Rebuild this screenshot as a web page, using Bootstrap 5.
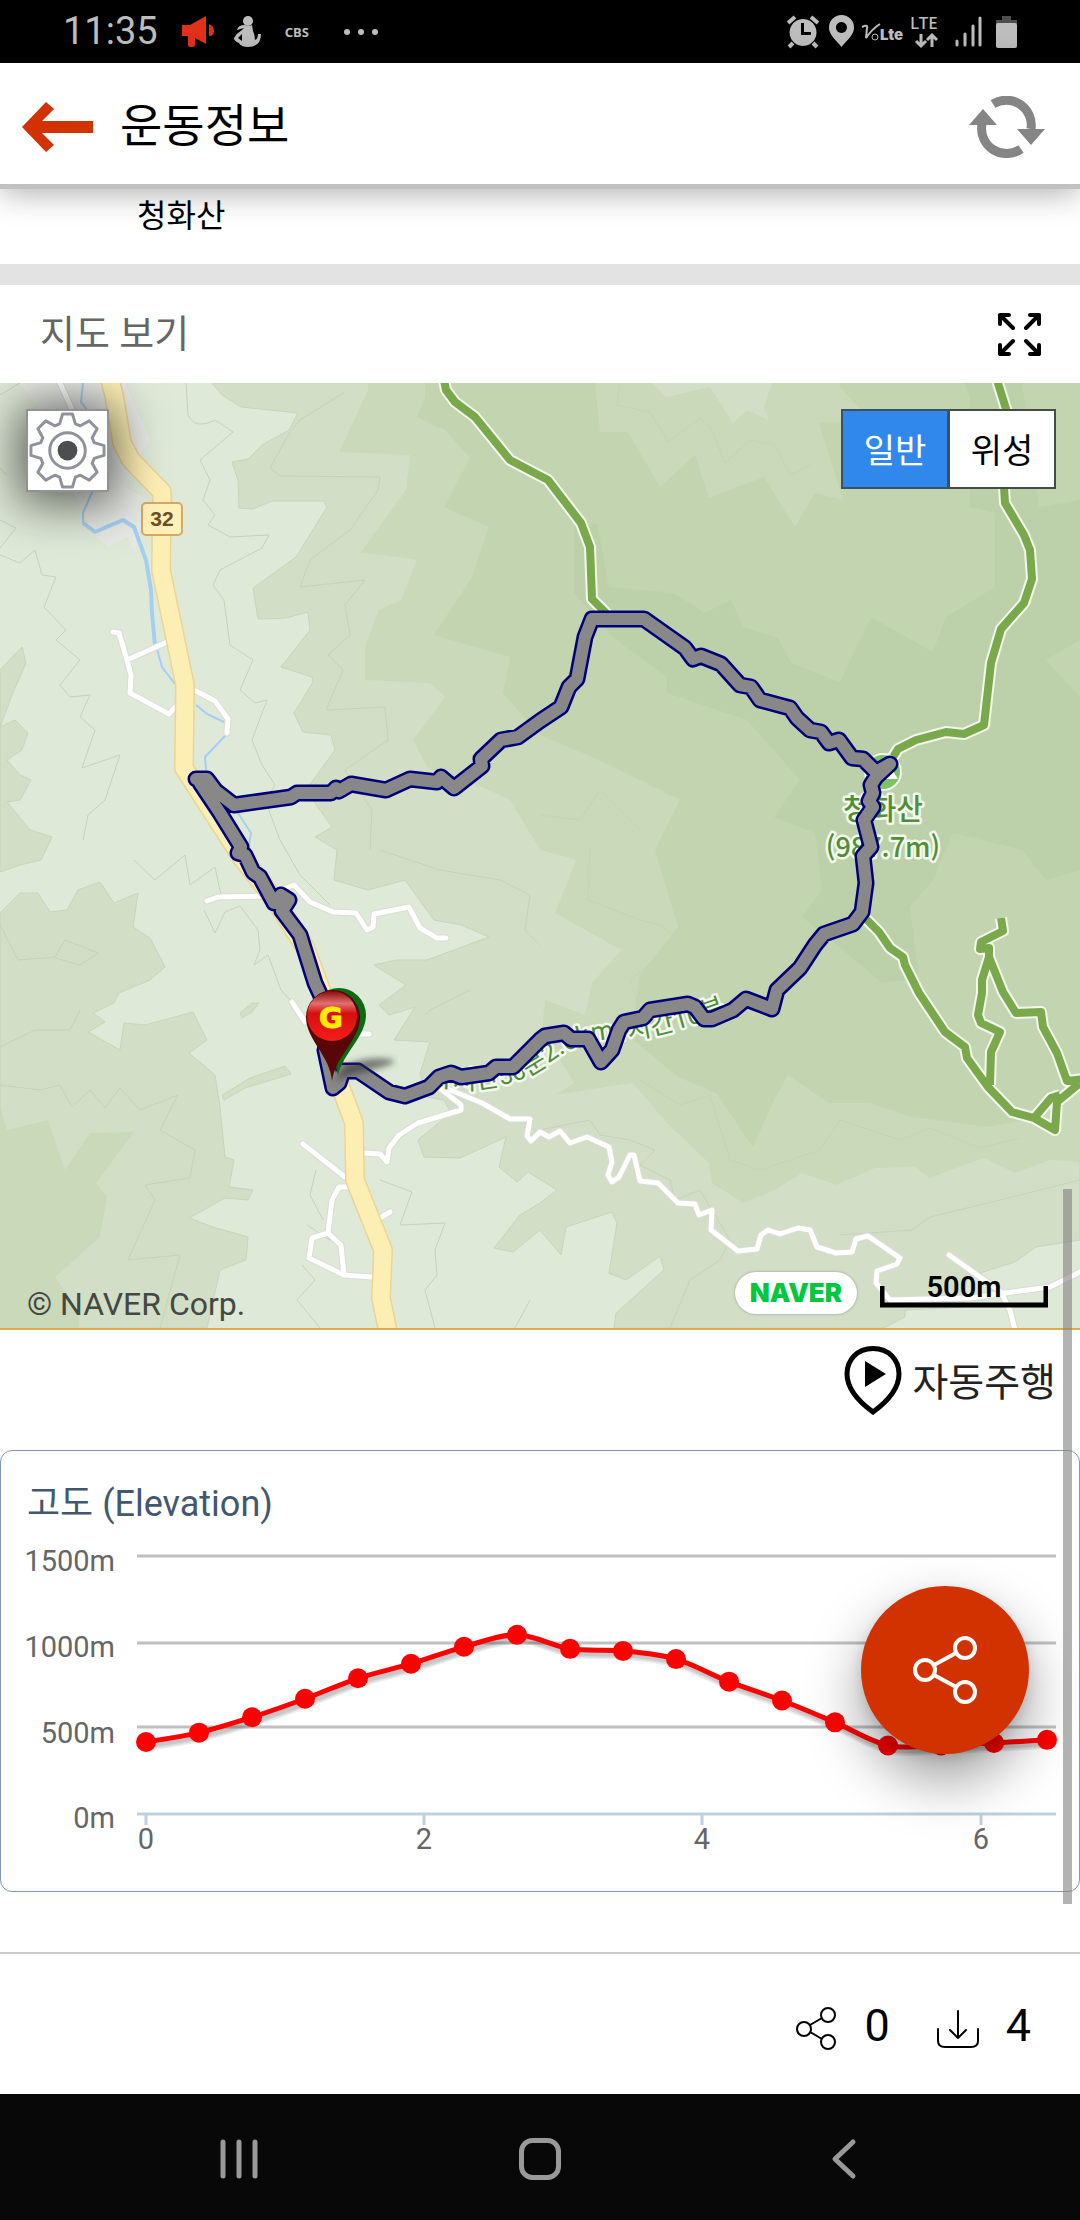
<!DOCTYPE html>
<html lang="ko">
<head>
<meta charset="utf-8">
<meta name="viewport" content="width=device-width, initial-scale=1">
<title>운동정보</title>
<link href="https://cdn.jsdelivr.net/npm/bootstrap@5.3.0/dist/css/bootstrap.min.css" rel="stylesheet">
<style>
  body { font-family: Roboto, "Noto Sans CJK KR", sans-serif; color: #000; background: #fff; line-height: 1.2; }
  svg { display: block; flex: none; }
  button { flex: none; }
  .status-strip { min-height: 63px; padding: 0 63px; background: #000; color: #bdbdbd; }
  .status-strip .clock { font-size: 38px; }
  .status-strip .carrier { font: 700 13px "Noto Sans", sans-serif; }
  .status-strip .runner { margin-left: 20px; }
  .status-strip .more { margin-left: 34px; }
  .app-header { min-height: 126px; padding: 6px 34px 0 20px; border-bottom: 5px solid #c1c1c1; background: #fff; box-shadow: 0 4px 30px rgba(0,0,0,.32); z-index: 2; }
  .app-header h1 { font-size: 46px; font-weight: 400; }
  .peak-row { min-height: 75px; padding: 0 137px 20px; font-size: 32px; }
  .divider-band { height: 21px; background: #e3e3e3; }
  .map-title { min-height: 98px; padding: 2px 36px 0 40px; }
  .map-title h2 { font-size: 38px; font-weight: 400; color: #666; }
  .map-frame { border-bottom: 2px solid #e3ab45; overflow: hidden; }
  .map-frame > svg { width: 100%; height: auto; }
  .gear-btn { top: 26px; left: 26px; width: 83px; height: 83px; border: 2px solid #929292; background: #fff; box-shadow: 0 4px 48px 8px rgba(0,0,0,.6); }
  .layer-switch { top: 26px; right: 24px; }
  .layer-switch .btn { width: 108px; height: 80px; border: 2px solid #454c45; border-radius: 0; background: #fff; color: #000; font-size: 34px; line-height: 76px; padding: 2px 0 0; }
  .layer-switch .btn-check:checked + .btn { background: #3088ec; color: #fff; border-color: #3c5064; }
  .map-credit { left: 27px; bottom: 5px; font-size: 32px; color: #444844; }
  .map-corner { right: 32px; bottom: 14px; gap: 23px; }
  .naver-pill { width: 122px; height: 42px; border-radius: 21px; background: #fff; color: #03c83f; font: 900 26px/42px Inter, sans-serif; box-shadow: 0 0 3px rgba(0,0,0,.3); }
  .scale-bar { width: 168px; height: 38px; font-size: 29px; font-weight: 600; line-height: 34px; margin-bottom: 6px; }
  .scale-bar svg { left: 0; bottom: 0; }
  .drive-row { min-height: 120px; padding: 0 24px 20px; }
  .drive-row button { gap: 10px; font-size: 39px; color: #222; }
  .drive-row .caption { padding-top: 6px; }
  .chart-card { border: 1px solid #8299b8; border-radius: 12px; min-height: 442px; padding-top: 29px; }
  .chart-card h2 { font-size: 36px; font-weight: 400; color: #42586e; padding-left: 26px; line-height: 48px; }
  .chart-card .plot { width: 100%; height: auto; }
  .share-fab { right: 50px; bottom: 137px; width: 168px; height: 168px; background: #d23200; box-shadow: 0 26px 56px rgba(0,0,0,.38), 0 4px 12px rgba(0,0,0,.12); }
  .count-bar { margin-top: 60px; border-top: 2px solid #ccc; min-height: 142px; padding: 4px 49px 0; }
  .count-bar .btn { gap: 27px; font-size: 45px; padding: 0; border: 0; color: #000; }
  .count-bar svg { margin-top: 6px; }
  .count-bar .counts { gap: 47px; }
  .nav-strip { min-height: 126px; padding: 4px 88px 0; background: #080808; }
  .scroll-thumb { right: 8px; top: 1189px; width: 9px; height: 715px; background: rgba(128,128,128,.6); z-index: 3; }
</style>
<script src="https://cdn.jsdelivr.net/npm/bootstrap@5.3.0/dist/js/bootstrap.bundle.min.js"></script>
</head>
<body class="position-relative">

<div class="status-strip d-flex align-items-center">
  <span class="clock">11:35</span>
  <svg class="ms-4" width="32" height="32" viewBox="0 0 32 32" fill="#e2301a"><path d="M0 9 8 9 24 0V28L13 22V29Q13 31 11 31H8Q6 31 6 29V20H0ZM27 8Q32 10 32 15T27 20Z"/></svg>
  <svg class="runner" width="27" height="32" viewBox="0 0 27 32" fill="#bdbdbd"><circle cx="14" cy="5" r="5"/><path fill-rule="evenodd" d="M11 9Q14 11 18 9L19 15Q21 19 21 24 24 23 24 18H27Q27 31 14 31 7 31 5 27 0 25 0 22 3 17 8 14L10 12Q6 13 3 14 4 9 11 9ZM8 18 4 22 8 25Z"/></svg>
  <span class="carrier ms-4">CBS</span>
  <svg class="more" width="36" height="8" viewBox="0 0 36 8" fill="#bdbdbd"><circle cx="4" cy="4" r="3"/><circle cx="18" cy="4" r="3"/><circle cx="32" cy="4" r="3"/></svg>
  <svg class="ms-auto" width="230" height="40" viewBox="787 11 230 40" fill="#bdbdbd" stroke="none">
    <path fill-rule="evenodd" d="M803 18a13.500 13.500 0 1 0 .1 0zM801 22h3v9h7v3h-10z"/>
    <path d="M788 22l7-6M818 22l-7-6M793 42l-4 4M813 42l4 4" stroke="#bdbdbd" stroke-width="4"/>
    <path fill-rule="evenodd" d="M841.500 14a12.500 12.500 0 0 0-12.500 13c0 7 8 13 12.500 19 4.500-6 12.500-12 12.500-19a12.500 12.500 0 0 0-12.500-13zm0 7a5.500 5.500 0 1 1-.1 0z"/>
    <path d="M862 26q6-3 5 1l-1 10q6-9 14-14" fill="none" stroke="#bdbdbd" stroke-width="2"/><circle cx="875" cy="36" r="3" fill="none" stroke="#bdbdbd" stroke-width="1"/>
    <text x="880" y="39" font-family="Inter" font-weight="900" font-size="15">Lte</text>
    <text x="910" y="28" font-family="Noto Sans" font-weight="500" font-size="17">LTE</text>
    <path d="M921 33v12m-5-5l5 5 5-5M932 46V34m-5 5l5-5 5 5" fill="none" stroke="#bdbdbd" stroke-width="3"/>
    <path d="M957 40v4M965 33v11M973 25v19M980 17v27" stroke="#bdbdbd" stroke-width="3" stroke-linecap="round"/>
    <path d="M1002 15h9v4h6v4h-21v-4h6z" fill="#4e4e4e"/><rect x="996" y="22" width="21" height="25" rx="2"/>
  </svg>
</div>

<header class="app-header d-flex align-items-center position-relative">
  <button type="button" class="btn p-0 border-0" aria-label="뒤로">
    <svg width="76" height="54" viewBox="21 99 76 54" fill="#d23200"><path d="M23 126 47 101 55 108 43 120H94V132H43L55 144 47 151Z"/></svg>
  </button>
  <h1 class="mb-0 ms-4">운동정보</h1>
  <button type="button" class="btn p-0 border-0 ms-auto" aria-label="새로고침">
    <svg width="78" height="62" viewBox="966 95 78 62" fill="none" stroke="#858585" stroke-width="9">
      <path d="M991 103A25 25 0 0 1 1029 128M1019 148A25 25 0 0 1 980 123"/>
      <path d="M1015 128h28l-14 16zM967 124h28l-14-16z" fill="#858585" stroke="none"/></svg>
  </button>
</header>

<main>
  <div class="peak-row d-flex align-items-center">청화산</div>
  <div class="divider-band"></div>

  <section>
    <div class="map-title d-flex align-items-center justify-content-between">
      <h2 class="mb-0">지도 보기</h2>
      <button type="button" class="btn p-0 border-0" aria-label="전체 화면">
        <svg width="50" height="50" viewBox="993 311 50 50" fill="none" stroke="#000" stroke-width="4" stroke-linecap="round" stroke-linejoin="round"><path d="M1008 316h-9v9M999 316l13 13M1029 316h9v9M1038 316l-13 13M1008 355h-9v-9M999 355l13-13M1029 355h9v-9M1038 355l-13-13"/></svg>
      </button>
    </div>

    <div class="map-frame position-relative">
      <svg viewBox="0 383 1080 945" role="img" aria-label="청화산 등산 경로 지도">
        <rect y="383" width="1080" height="945" fill="#dfe9d8"/>
        <!-- hypsometric tints, low to high -->
        <g fill="#d2dfc6" stroke="#c7d5b9" stroke-width="1" stroke-linejoin="round">
          <path d="M212 383 222 395 241 407 298 413 289 430 262 445 248 459 232 462 238 480 239 508 253 509 272 501 324 501 327 507 296 557 253 588 258 619 286 618 308 612 310 630 281 667 312 677 313 682 294 713 303 732 331 735 335 750 306 790 332 827 315 837 337 850 334 880 368 890 405 880 434 920 461 925 489 937 427 960 396 960 374 965 406 985 379 1005 389 1015 415 1007 394 1040 430 1042 420 1073 427 1097 444 1100 451 1113 418 1140 424 1157 460 1158 506 1137 499 1167 517 1182 528 1172 557 1190 540 1203 520 1215 494 1248 513 1252 540 1230 561 1255 566 1227 612 1212 617 1223 609 1273 626 1280 660 1256 664 1270 616 1313 614 1328H884L905 1317V1310L963 1307 967 1277 1015 1262 1036 1247 1080 1240V383Z"/>
          <path d="M0 670 22 647 26 663 12 695 0 727 15 720 28 733 22 750 7 760 20 775 31 780 20 800 7 802 30 830 52 837 41 860 20 865 0 872Z"/>
          <path d="M0 913 20 893 38 893 50 912 67 910 78 890 100 882 114 903 138 893 133 927 150 938 165 967 150 980 119 993 114 1003 93 1013 105 1022 88 1032 120 1050 124 1023 145 1025 193 1012 207 1040 189 1053 215 1075 220 1107 225 1157 234 1160 229 1187 253 1190 248 1200 225 1198 189 1218 213 1227 248 1237 246 1260 220 1270 207 1328H0Z"/>
          <path d="M222 1095 250 1078 285 1066 291 1074 245 1088 224 1100ZM240 1013 252 1003 259 1003 252 1012 242 1018Z"/>
        </g>
        <g fill="#cad9ba">
          <path d="M368 390 339 452 410 455 406 490 360 553 382 555 417 560 401 600 379 610 365 647 365 680 430 683 445 697 413 740 427 767 458 782 482 787 510 800 540 850 576 860 555 913 621 950 592 983 585 1015 545 1000 542 1030 574 1083 555 1095 633 1083 667 1123 709 1163 712 1183 743 1203 775 1190 802 1173 836 1185 875 1168 915 1167 929 1178 984 1158 1015 1173 1050 1160 1080 1162V383H368Z"/>
          <path d="M0 1105 7 1130 48 1120 65 1170 90 1133 134 1132 96 1183 107 1197 100 1237 55 1277 79 1313 79 1328H0Z"/>
        </g>
        <path fill="#c3d4b0" d="M425 397 417 417 445 430 470 458 444 507 489 527 472 577 434 635 510 657 503 693 540 735 599 760 640 780 680 800 655 850 678 927 640 975 630 1037 678 1077 716 1093 753 1147 774 1100 788 1075 829 1103 870 1103 912 1117 988 1127 1034 1118 1080 1090V383H425Z"/>
        <path fill="#cad9ba" d="M595 383 600 432 628 432 660 487 695 455 709 498 764 477 795 527 815 493 843 500 819 423 870 420 840 387V383Z"/>
        <path fill="#d2dfc6" d="M652 383 666 397 710 387 733 423 747 410 769 420 764 407 772 383Z"/>
        <path fill="#bcd1aa" d="M574 527 597 523 609 587 674 593 705 613 731 600 743 627 778 638 791 663 840 682 871 617 933 652 946 617 995 587V513L970 507V397L964 383H1022L1039 507 1080 500V640L1046 660 1080 697V870L1046 880 1022 850 953 833 933 880 910 907 919 980 881 982 843 950 802 917 822 890 815 833 774 817 800 780 747 720 667 693V677L616 640 574 593Z"/>
        <path fill="#e7e9e4" d="M20 383 40 410 75 495 95 535 108 547 128 537 135 553 148 500 125 487 150 440 125 383Z"/>
        <!-- contour lines -->
        <g fill="none" stroke="#c5d3b8" stroke-width="1" stroke-linejoin="round">
          <path d="M186 383 188 415Q195 430 215 420L233 432 200 460 210 480 203 500 215 515 208 525 230 537 269 535 262 548 220 570 213 585 224 600 230 645 253 660 240 690 255 703 267 700 252 740 262 765 275 785 265 800 280 840 300 875 330 905"/>
          <path d="M345 392 300 420 290 432 270 468 280 476 380 477 378 490 350 530 310 560 300 587 365 580 345 605 350 635 328 655 343 670 326 710 385 707 388 740 345 770 372 810 370 850"/>
          <path d="M0 555 20 563 35 550 42 575 56 577 44 607 66 630 56 640 80 660 60 685 70 697 90 695 80 717 95 730 82 768 120 755 105 800 88 815 83 840M20 383 0 395M0 468 6 475M0 520 16 528 0 548"/>
          <path d="M0 925 18 960 55 957 65 940 98 953 80 965 55 958M0 1047 35 1030 70 1030 80 1010M0 1085 40 1090 60 1085 72 1107 90 1090 105 1108 120 1088 140 1110 178 1095 160 1130 195 1150 190 1178 145 1185 155 1200 128 1260 180 1255 160 1328"/>
          <path d="M204 910 215 933 225 912 240 906 258 930 260 950 254 965 268 955 281 990 290 1000M134 860 155 880 185 855 190 885 215 867 222 900M316 1170 310 1195 323 1220M307 1225 330 1240M302 1265 315 1280 297 1300 320 1328M380 1180 412 1192 400 1225 445 1223 435 1250 437 1275 425 1290 435 1328M515 1328 530 1300"/>
          <path d="M540 1130 590 1120 600 1135 630 1140 655 1150 640 1165 670 1180 675 1200 700 1190 730 1240 720 1260 690 1280 670 1328M840 1235 912 1230 930 1217 1000 1200 1080 1180M620 383 617 405 650 412 668 442 700 418 712 430 725 463 750 440 775 445 790 475 812 465M640 1080 680 1105 710 1095 730 1160 760 1170 820 1150 840 1120 900 1140 930 1128 980 1148 1020 1138"/>
          <path d="M590 850 588 900 640 920 660 925 680 940 630 980 640 1010M380 850 440 870 500 880 530 895 525 930 540 945M470 990 430 1010 425 1015M540 815 580 820 600 790 640 830"/>
        </g>
        <!-- stream -->
        <g fill="none" stroke="#a5cff0" stroke-width="2" stroke-linejoin="round">
          <path d="M83 383 81 402 95 420M93 490 83 513V523M155 642 162 667 175 684M196 705 207 714 226 723M226 735 205 757 206 770M238 813 251 833 249 845"/>
          <path d="M83 523 95 532 123 520 134 527 146 560 151 590 152 613 155 645" stroke-width="4"/>
        </g>
        <!-- minor roads: casing, then surface -->
        <g fill="none" stroke-linejoin="round" stroke-linecap="round">
          <defs>
            <path id="lanes" d="M113 632 119 633 127 660 131 675 130 693 169 714 180 702M127 660 167 642M196 691 215 701 228 719 227 733M60 383 76 418M207 901 218 897 262 896 294 885 310 902 333 912 356 913 367 930 373 927 374 914 409 907 420 928 437 938 446 938M292 1002 305 1022M358 1034H369M441 1089 461 1105V1110L418 1123 399 1135 389 1148 387 1162 380 1154 365 1153M448 1089 482 1103 510 1119H530L527 1136 531 1141 540 1132 549 1137 560 1131 570 1143 587 1137 609 1147 612 1162 608 1175 612 1182 619 1177 630 1155H634L640 1181 658 1183 678 1203 695 1204 699 1215 712 1210 711 1230 738 1251 757 1249 761 1235 768 1230 780 1234 798 1228 810 1230 817 1247 836 1253 852 1252 856 1239 868 1236 900 1258 897 1264 877 1271 876 1283 890 1300 970 1298 1005 1293 1050 1287 1080 1272M949 1255 1001 1292 1010 1310 1015 1330M303 1144 345 1177M348 1187H339L332 1200 328 1233 312 1238 309 1258 344 1275 372 1277M328 1233 341 1245 344 1275M380 1218 390 1212"/>
          </defs>
          <use href="#lanes" stroke="#d9dcd4" stroke-width="7"/>
          <use href="#lanes" stroke="#fff" stroke-width="5"/>
        </g>
        <!-- route 32 -->
        <defs><path id="road32" d="M110 380 114 395 122 443 131 460 162 492 161 570 185 685 184 768 242 858 275 900 305 947 325 1000 335 1072 354 1123 355 1180 383 1250 381 1298 388 1332"/></defs>
        <g fill="none" stroke-linejoin="round">
          <use href="#road32" stroke="#ead592" stroke-width="20"/>
          <use href="#road32" stroke="#fdefb4" stroke-width="17"/>
        </g>
        <rect x="142" y="503" width="40" height="32" rx="4" fill="#fef1b8" stroke="#d7a864" stroke-width="2"/>
        <text x="162" y="526" text-anchor="middle" font-family="Liberation Sans" font-weight="700" font-size="21" fill="#6b5027">32</text>
        <!-- hiking trails -->
        <defs><path id="trails" d="M444 380 446 390 455 402 475 417 510 460 548 480 581 523 590 547 592 599 607 614M997 380 1007 412 1004 487 1005 503 1024 535 1030 550 1032 579 1024 603 1001 629 991 663 984 725 964 734 946 732 916 740 898 749 888 765M865 918 879 932 890 948 903 957 905 965 919 993 945 1032 965 1047 967 1058 988 1087 1012 1112 1034 1118 1055 1130 1057 1102 1080 1083M1034 1118 1051 1098 1060 1095M1001 918 1003 931 981 942 980 949 989 948V957L982 980V993L978 1015 981 1023 1000 1032 991 1052 990 1085M989 957 1003 992 1016 1013 1041 1012 1043 1027 1057 1053 1067 1081 1084 1079"/></defs>
        <g fill="none" stroke-linejoin="round">
          <use href="#trails" stroke="#f3f7ee" stroke-width="12"/>
          <use href="#trails" stroke="#79a94a" stroke-width="8"/>
        </g>
        <circle cx="883" cy="772" r="18" fill="#7cc463" stroke="#f3f7ee" stroke-width="2"/>
        <path d="M884 779 891 768 898 779Z" fill="#fff"/>
        <g fill="#4f8f37" stroke="#f3f7ee" stroke-width="5" stroke-linejoin="round" paint-order="stroke">
          <g text-anchor="middle" font-family="Noto Sans CJK KR" font-weight="500">
            <text x="883" y="820" font-size="29">청화산</text>
            <text x="883" y="857" font-size="27">(987.7m)</text>
          </g>
          <path id="trailLabel" d="M438 1089Q510 1094 548 1064T630 1040Q690 1030 760 1000" fill="none" stroke="none"/>
          <text font-size="26" font-family="Roboto, Noto Sans CJK KR"><textPath href="#trailLabel">1시간50분2.6km1시간10분</textPath></text>
        </g>
        <!-- recorded track: outline, then body -->
        <defs><path id="track" d="M196 779H207L216 791 234 805 291 797 297 793H331L336 788 339 791 351 784 386 790 410 779 437 782 441 777 454 788 482 766 481 759 501 740 518 737 540 721 561 707 569 687 577 679 585 637 592 619H644L685 648 693 659 701 656 721 664 740 685 751 687 760 700 790 708 797 718 810 730 821 732 829 743 839 740 852 758 863 759 876 772 890 764 876 777 871 785 873 793 869 801 873 807 864 820 871 847 863 856 866 883 862 912 853 924 824 934 815 945 800 968 777 990 772 1009 746 999 733 1010 712 1019H704L695 1007 688 1004 650 1010 643 1018 624 1022 619 1030 612 1050 601 1062 588 1039H571L564 1033 545 1036 540 1040 513 1067H496L489 1073 461 1077 451 1073 439 1077 429 1087 405 1096 389 1092 358 1071H343L339 1083 333 1088 325 1050M315 983 300 935 282 911 289 900 281 895 274 903 260 877 253 872 245 855 238 853 241 847 220 813 200 783M315 983 332 1020"/></defs>
        <g fill="none" stroke-linejoin="round" stroke-linecap="round">
          <use href="#track" stroke="#00007d" stroke-width="17"/>
          <use href="#track" stroke="#888" stroke-width="12"/>
        </g>
        <!-- goal marker over start marker -->
        <defs>
          <filter id="soft" x="-30%" y="-60%" width="160%" height="220%"><feGaussianBlur stdDeviation="3"/></filter>
          <linearGradient id="ball" x1="0" y1="0" x2="0" y2="1"><stop offset="0" stop-color="#8c0808"/><stop offset=".25" stop-color="#e07070"/><stop offset=".45" stop-color="#d80f0f"/><stop offset="1" stop-color="#f51c1c"/></linearGradient>
        </defs>
        <path d="M334 1082 345 1066Q365 1056 388 1059T350 1075Z" fill="#333" opacity=".6" filter="url(#soft)"/>
        <path d="M338 1075C334 1050 312 1040 312 1015A27 27 0 0 1 366 1015C366 1036 344 1052 338 1075Z" fill="#0b6a14"/>
        <path d="M332 1081C330 1055 306 1040 306 1017A27 27 0 0 1 360 1017C360 1040 336 1055 332 1081Z" fill="#590606"/>
        <circle cx="332" cy="1016" r="25" fill="url(#ball)"/>
        <text x="331" y="1028" text-anchor="middle" font-family="DejaVu Sans" font-weight="700" font-size="29" fill="#ffec00" stroke="#ffec00" stroke-width="1">G</text>
      </svg>

      <button type="button" class="gear-btn position-absolute p-0" aria-label="지도 설정">
        <svg class="w-100 h-100" viewBox="-40 -40 80 80" fill="none" stroke="#8f9298" stroke-width="3" stroke-linejoin="round">
          <path d="M-8-27-5-37H5L8-27 13-25 22-30 30-22 25-13 27-8 37-5V5L27 8 25 13 30 22 22 30 13 25 8 27 5 37H-5L-8 27-13 25-22 30-30 22-25 13-27 8-37 5V-5L-27-8-25-13-30-22-22-30-13-25Z"/>
          <circle r="18"/><circle r="10" fill="#4d4e50" stroke="none"/></svg>
      </button>

      <div class="layer-switch btn-group position-absolute" role="group" aria-label="지도 종류">
        <input type="radio" class="btn-check" name="layer" id="layerNormal" checked>
        <label class="btn" for="layerNormal">일반</label>
        <input type="radio" class="btn-check" name="layer" id="layerSat">
        <label class="btn" for="layerSat">위성</label>
      </div>

      <div class="map-credit position-absolute">© NAVER Corp.</div>
      <div class="map-corner position-absolute d-flex align-items-end">
        <div class="naver-pill text-center">NAVER</div>
        <div class="scale-bar position-relative text-center">500m
          <svg class="position-absolute" width="168" height="22" viewBox="0 0 168 22"><path d="M2 0V19H166V0" fill="none" stroke="#000" stroke-width="5"/></svg>
        </div>
      </div>
    </div>
  </section>

  <div class="drive-row d-flex align-items-center justify-content-end">
    <button type="button" class="btn p-0 border-0 d-flex align-items-center">
      <svg width="58" height="70" viewBox="843 1345 58 70"><path d="M872 1348.500C888 1348.500 898 1360 898 1374 898 1391 883 1404 872 1412 861 1404 846 1391 846 1374 846 1360 856 1348.500 872 1348.500Z" fill="none" stroke="#000" stroke-width="5"/><path d="M864 1361V1387L885 1374Z"/></svg>
      <span class="caption">자동주행</span>
    </button>
  </div>

  <section class="chart-card position-relative">
    <h2 class="mb-0">고도 (Elevation)</h2>
    <svg class="plot" viewBox="1 1528 1078 335" role="img" aria-label="고도 그래프">
      <g stroke="#c0c0c0" stroke-width="3"><path d="M137 1556H1056M137 1643H1056M137 1727H1056"/></g>
      <path d="M137 1814H1056M146 1814V1825M424 1814V1825M702 1814V1825M981 1814V1825" stroke="#c0d0e0" stroke-width="3"/>
      <g font-size="29" fill="#666" font-family="Roboto">
        <g text-anchor="end"><text x="115" y="1571">1500m</text><text x="115" y="1657">1000m</text><text x="115" y="1743">500m</text><text x="115" y="1828">0m</text></g>
        <g text-anchor="middle"><text x="146" y="1849">0</text><text x="424" y="1849">2</text><text x="702" y="1849">4</text><text x="981" y="1849">6</text></g>
      </g>
      <g id="elevation" fill="none"></g>
    </svg>
    <button type="button" class="share-fab btn rounded-circle border-0 p-0 position-absolute d-flex align-items-center justify-content-center" aria-label="공유">
      <svg width="66" height="70" viewBox="0 0 66 70" fill="none" stroke="#fff" stroke-width="4"><circle cx="13" cy="35" r="10"/><circle cx="53" cy="13" r="10"/><circle cx="53" cy="57" r="10"/><path d="M22 30 44 18M22 40 44 52"/></svg>
    </button>
  </section>
</main>

<footer>
  <div class="count-bar d-flex align-items-center justify-content-end">
    <div class="counts d-flex align-items-center">
      <button type="button" class="btn d-flex align-items-center" aria-label="공유 0">
        <svg width="42" height="46" viewBox="796 2006 42 46" fill="none" stroke="#000" stroke-width="2"><circle cx="805" cy="2029" r="7"/><circle cx="829" cy="2015" r="7"/><circle cx="829" cy="2042" r="7"/><path d="M811 2025 823 2018M811 2032 823 2039"/></svg>
        <span>0</span>
      </button>
      <button type="button" class="btn d-flex align-items-center" aria-label="다운로드 4">
        <svg width="42" height="46" viewBox="937 2006 42 46" fill="none" stroke="#000" stroke-width="2" stroke-linecap="round" stroke-linejoin="round"><path d="M938 2029V2041Q938 2047 945 2047H971Q978 2047 978 2041V2029M958 2011V2038M950 2030 958 2038 966 2030"/></svg>
        <span>4</span>
      </button>
    </div>
  </div>
  <nav class="nav-strip row g-0 align-items-center" aria-label="시스템">
    <button type="button" class="btn p-0 border-0 col d-flex justify-content-center" aria-label="최근 앱"><svg width="44" height="44" viewBox="0 0 44 44" stroke="#999" stroke-width="5" stroke-linecap="round"><path d="M6 5V39M22 5V39M38 5V39"/></svg></button>
    <button type="button" class="btn p-0 border-0 col d-flex justify-content-center" aria-label="홈"><svg width="44" height="44" viewBox="0 0 44 44" fill="none" stroke="#999" stroke-width="5"><rect x="3.500" y="3.500" width="37" height="37" rx="11"/></svg></button>
    <button type="button" class="btn p-0 border-0 col d-flex justify-content-center" aria-label="뒤로"><svg width="44" height="44" viewBox="0 0 44 44" fill="none" stroke="#999" stroke-width="5" stroke-linecap="round" stroke-linejoin="round"><path d="M34 5 16 22 34 39"/></svg></button>
  </nav>
</footer>

<div class="scroll-thumb position-absolute"></div>

<script>
  // elevation samples in metres, evenly spaced along the 6.48 km track
  const metres = [415, 470, 560, 668, 788, 873, 972, 1042, 960, 948, 900, 768, 658, 530, 395, 395, 410, 428];
  const pts = metres.map((m, i) => [146 + i * 53, 1813 - m * 0.171]);
  let d = `M${pts[0]}`;
  for (let i = 1; i < pts.length; i++) {
    const a = pts[i - 2] || pts[i - 1], b = pts[i - 1], c = pts[i], e = pts[i + 1] || c;
    d += `C${b[0] + (c[0] - a[0]) / 6} ${b[1] + (c[1] - a[1]) / 6} ${c[0] - (e[0] - b[0]) / 6} ${c[1] - (e[1] - b[1]) / 6} ${c}`;
  }
  document.getElementById('elevation').innerHTML =
    [10, 7, 4].map(w => `<path d="${d}" transform="translate(2 4)" stroke="#000" stroke-opacity=".08" stroke-width="${w}"/>`).join('') +
    `<path d="${d}" stroke="#f00" stroke-width="5"/>` +
    pts.map(p => `<circle cx="${p[0]}" cy="${p[1]}" r="10" fill="#f00"/>`).join('');
</script>
</body>
</html>
